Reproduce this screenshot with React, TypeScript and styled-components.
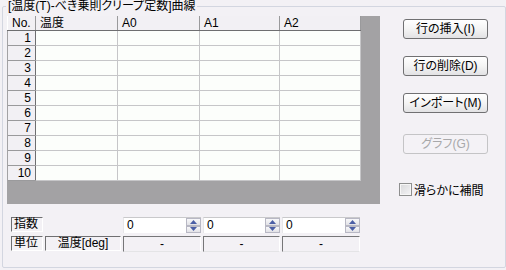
import React from "react";
import styled, { createGlobalStyle } from "styled-components";

const Global = createGlobalStyle`
  html, body { margin: 0; padding: 0; background: #f3f1f5; }
  body { width: 506px; height: 270px; overflow: hidden; font-family: "Liberation Sans", "Noto Sans CJK JP", sans-serif; font-size: 12px; color: #000; font-feature-settings: "palt"; }
`;

const Page = styled.div`
  width: 506px;
  height: 270px;
  padding: 6px 1px 0 2px;
  box-sizing: border-box;
  background: #f3f1f5;
`;

const Group = styled.div`
  position: relative;
  width: 504px;
  height: 262px;
  box-sizing: border-box;
  border: 1px solid #d3d6e0;
  border-radius: 2px;
  padding: 9px 0 0 4px;
`;

const Title = styled.div`
  position: absolute;
  top: -8px;
  left: 3px;
  padding: 0 2px;
  background: #f3f1f5;
  line-height: 15px;
  font-size: 12px;
  white-space: nowrap;
`;

const Main = styled.div`
  display: flex;
  align-items: flex-start;
`;

const Left = styled.div`
  display: flex;
  flex-direction: column;
`;

const GridArea = styled.div`
  width: 373px;
  height: 188px;
  background: #a3a2a4;
`;

const Table = styled.table`
  border-collapse: collapse;
  table-layout: fixed;
  width: 353px;
  font-size: 12px;
`;

const HeadCell = styled.th<{ $w: number }>`
  width: ${(p) => p.$w}px;
  height: 14px;
  padding: 0 0 0 4px;
  box-sizing: border-box;
  background: #f2f0f4;
  border-right: 1px solid #9a9a9c;
  border-left: 1px solid #ffffff;
  border-bottom: 1px solid #6e6e70;
  text-align: left;
  font-weight: normal;
  line-height: 14px;
  white-space: nowrap;
`;

const RowHead = styled.td`
  height: 14px;
  padding: 0 4px 0 0;
  background: #f2f0f4;
  border-right: 1px solid #6e6e70;
  border-bottom: 1px solid #9a9a9c;
  text-align: right;
  line-height: 14px;
`;

const Cell = styled.td`
  height: 14px;
  padding: 0;
  background: #fcfefb;
  border-right: 1px solid #c6c6c8;
  border-bottom: 1px solid #c6c6c8;
`;

const Params = styled.div`
  display: grid;
  grid-template-columns: 32px 76px 78px 77px 78px;
  grid-template-rows: 17px 16px;
  column-gap: 2px;
  row-gap: 2px;
  margin: 13px 0 0 4px;
  align-items: start;
`;

const LabelBox = styled.div<{ $center?: boolean }>`
  height: 15px;
  box-sizing: border-box;
  border-top: 1px solid #6f6f71;
  border-left: 1px solid #6f6f71;
  border-right: 1px solid #ffffff;
  border-bottom: 1px solid #ffffff;
  padding: 0 ${(p) => (p.$center ? 0 : 2)}px;
  text-align: ${(p) => (p.$center ? "center" : "left")};
  line-height: 13px;
  white-space: nowrap;
`;

const Spinner = styled.div`
  display: flex;
  height: 16px;
  box-sizing: border-box;
  background: #ffffff;
  border-top: 1px solid #c9c9cb;
  border-left: 1px solid #e6e6e8;
`;

const SpinValue = styled.div`
  flex: 1;
  padding-left: 3px;
  line-height: 15px;
`;

const SpinButtons = styled.div`
  width: 15px;
  display: flex;
  flex-direction: column;
`;

const SpinHalf = styled.div`
  flex: 1;
  display: flex;
  align-items: center;
  justify-content: center;
  background: linear-gradient(#f8f8fa, #e2e2e6);
  border: 1px solid #b8b8c4;
  box-sizing: border-box;
`;

const DashBox = styled.div`
  height: 16px;
  box-sizing: border-box;
  border-top: 1px solid #767678;
  border-left: 1px solid #767678;
  border-right: 1px solid #ffffff;
  border-bottom: 1px solid #e4e4e6;
  text-align: center;
  line-height: 14px;
`;

const Right = styled.div`
  display: flex;
  flex-direction: column;
  margin-left: 23px;
  padding-top: 3px;
`;

const Button = styled.div<{ $disabled?: boolean; $gap: number }>`
  width: 85px;
  height: 20px;
  box-sizing: border-box;
  margin-top: ${(p) => p.$gap}px;
  border: 1px solid ${(p) => (p.$disabled ? "#c4c4c6" : "#707072")};
  border-radius: 3px;
  background: ${(p) =>
    p.$disabled ? "#f4f2f6" : "linear-gradient(#ffffff 0%, #f4f4f4 50%, #e2e2e4 100%)"};
  color: ${(p) => (p.$disabled ? "#a8a8aa" : "#000")};
  display: flex;
  align-items: center;
  justify-content: center;
  line-height: 18px;
  white-space: nowrap;
`;

const CheckRow = styled.div`
  display: flex;
  align-items: center;
  margin-top: 27px;
  margin-left: -4px;
  gap: 2px;
`;

const CheckBox = styled.div`
  width: 13px;
  height: 13px;
  box-sizing: border-box;
  border: 1px solid #8e8f8f;
  background: linear-gradient(135deg, #d8d8da, #f4f4f6);
  box-shadow: inset 0 0 0 1px #f6f6f6;
`;

const Up = () => (
  <svg width="7" height="4" viewBox="0 0 7 4">
    <path d="M3.5 0 L7 4 L0 4 Z" fill="#4b5fa6" />
  </svg>
);
const Down = () => (
  <svg width="7" height="4" viewBox="0 0 7 4">
    <path d="M0 0 L7 0 L3.5 4 Z" fill="#4b5fa6" />
  </svg>
);

const SpinInput = ({ value }: { value: string }) => (
  <Spinner>
    <SpinValue>{value}</SpinValue>
    <SpinButtons>
      <SpinHalf><Up /></SpinHalf>
      <SpinHalf><Down /></SpinHalf>
    </SpinButtons>
  </Spinner>
);

const cols = [
  { label: "No.", w: 28 },
  { label: "温度", w: 82 },
  { label: "A0", w: 82 },
  { label: "A1", w: 80 },
  { label: "A2", w: 81 },
];

export default function App() {
  const rows = Array.from({ length: 10 }, (_, i) => i + 1);
  return (
    <Page>
      <Global />
      <Group>
        <Title>[温度(T)-べき乗則クリープ定数]曲線</Title>
        <Main>
          <Left>
            <GridArea>
              <Table>
                <thead>
                  <tr>
                    {cols.map((c) => (
                      <HeadCell key={c.label} $w={c.w}>{c.label}</HeadCell>
                    ))}
                  </tr>
                </thead>
                <tbody>
                  {rows.map((r) => (
                    <tr key={r}>
                      <RowHead>{r}</RowHead>
                      <Cell />
                      <Cell />
                      <Cell />
                      <Cell />
                    </tr>
                  ))}
                </tbody>
              </Table>
            </GridArea>
            <Params>
              <LabelBox>指数</LabelBox>
              <div />
              <SpinInput value="0" />
              <SpinInput value="0" />
              <SpinInput value="0" />
              <LabelBox>単位</LabelBox>
              <LabelBox $center>温度[deg]</LabelBox>
              <DashBox>-</DashBox>
              <DashBox>-</DashBox>
              <DashBox>-</DashBox>
            </Params>
          </Left>
          <Right>
            <Button $gap={0}>行の挿入(I)</Button>
            <Button $gap={17}>行の削除(D)</Button>
            <Button $gap={17}>インポート(M)</Button>
            <Button $gap={21} $disabled>グラフ(G)</Button>
            <CheckRow>
              <CheckBox />
              <span>滑らかに補間</span>
            </CheckRow>
          </Right>
        </Main>
      </Group>
    </Page>
  );
}
